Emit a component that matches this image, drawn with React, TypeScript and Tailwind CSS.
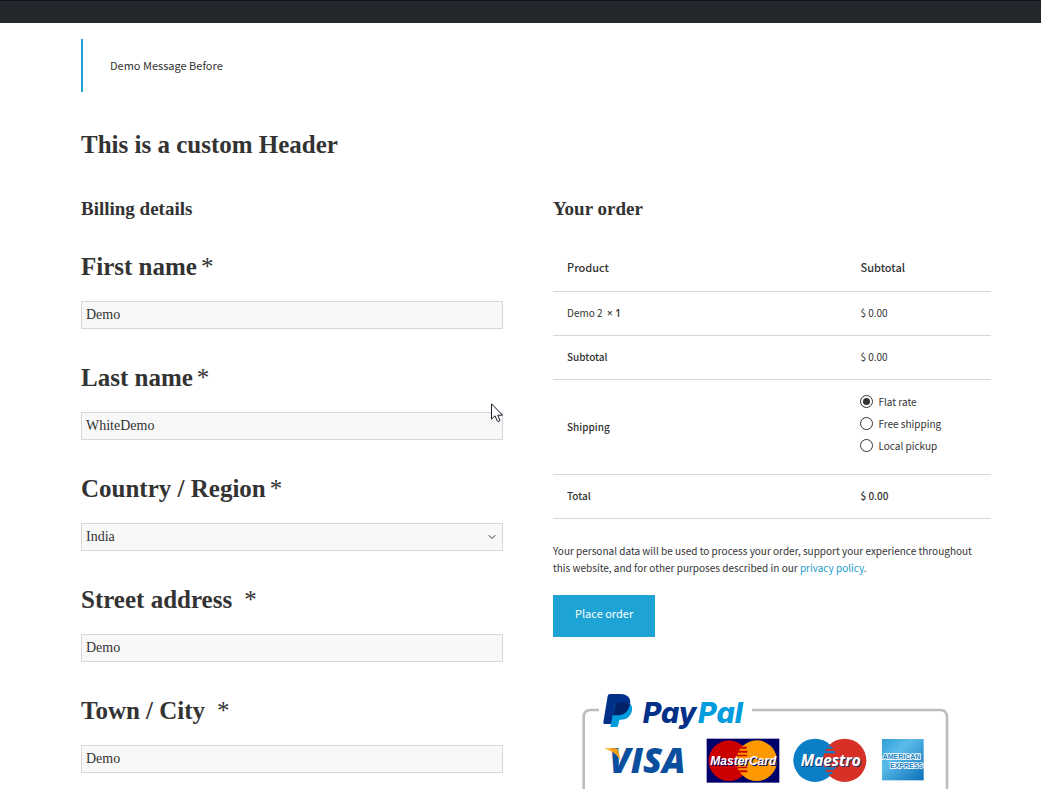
import React from "react";
import { ChevronDown } from "lucide-react";

interface FieldProps {
  id: string;
  label: string;
  // extra space between the label and the required mark
  wide?: boolean;
  children: React.ReactNode;
}

const inputClass =
  "block h-7 w-full appearance-none rounded-none border border-[#d8d8d8] bg-[#f8f8f8] px-1 font-['Liberation_Serif',serif] text-[14px] leading-5 text-[#333] outline-none";

const Field: React.FC<FieldProps> = ({ id, label, wide, children }) => (
  <div>
    <label
      htmlFor={id}
      className="mb-4 block font-['Liberation_Serif',serif] text-[25px] leading-9 font-bold"
    >
      {label}
      <span className={wide ? "ml-3 font-normal" : "ml-1 font-normal"}>*</span>
    </label>
    <div className="relative">{children}</div>
  </div>
);

const Pointer: React.FC = () => (
  <svg
    className="pointer-events-none absolute -top-[9px] right-0"
    width="12"
    height="20"
    viewBox="0 0 12 20"
    aria-hidden="true"
  >
    <path
      d="M.5 .8V16.2L4 12.8L6.4 18.2Q7.6 19 9 17.6L6.8 12.2H11.5Z"
      fill="#fff"
      stroke="#1b1b2b"
      strokeWidth="1"
    />
  </svg>
);

const shippingMethods = ["Flat rate", "Free shipping", "Local pickup"];

const PaymentLogos: React.FC = () => (
  <svg
    className="block w-full"
    viewBox="0 0 438 99"
    role="img"
    aria-label="PayPal, Visa, MasterCard, Maestro, American Express"
  >
    <defs>
      <linearGradient id="amex" x1="0" y1="0" x2="1" y2="1">
        <stop offset="0" stopColor="#2f9fd8" />
        <stop offset="0.35" stopColor="#5cbcea" />
        <stop offset="1" stopColor="#0a6fb8" />
      </linearGradient>
      <clipPath id="mc-left">
        <circle cx="560" cy="242" r="61" />
      </clipPath>
      <clipPath id="ma-left">
        <circle cx="735" cy="241" r="65" />
      </clipPath>
    </defs>
    <g transform="translate(17 -10) scale(0.33333)">
      {/* frame */}
      <g fill="none" strokeWidth="8">
        <path d="M87 90H62Q41 90 41 112V330" stroke="#bdbdbd" />
        <path d="M546 90H1111Q1131 90 1131 112V330" stroke="#bdbdbd" />
      </g>

      {/* PayPal */}
      <path
        d="M120 42H152Q186 44 180 76Q172 106 140 106H130L125 132H103Q99 132 100 127L113 48Q114 42 120 42Z"
        fill="#003087"
      />
      <path
        d="M178 69Q190 78 185 96Q178 119 152 119H148L144 138Q143 141 139 141H121L134 76Q136 69 143 69Z"
        fill="#009cde"
      />
      <path d="M143 68Q165 64 180 71Q174 106 140 106H128L135 75Q136 69 143 68Z" fill="#012169" />
      <g fontFamily="Inter, sans-serif" fontSize="86" fontWeight="800" fontStyle="italic">
        <text x="218" y="128" fill="#003087">
          Pay
        </text>
        <text x="384" y="128" fill="#009cde">
          Pal
        </text>
      </g>

      {/* Visa */}
      <text
        x="118"
        y="278"
        fill="#0a4f9e"
        fontFamily="Open Sans, sans-serif"
        fontSize="104"
        fontWeight="800"
        fontStyle="italic"
      >
        VISA
      </text>
      <path d="M102 205H136Q145 206 146 215L151 241Q137 215 102 205Z" fill="#f7a11a" />

      {/* MasterCard */}
      <rect x="410" y="176" width="218" height="132" fill="#00006b" />
      <circle cx="477" cy="242" r="61" fill="#cc0000" />
      <circle cx="560" cy="242" r="61" fill="#ff9900" />
      <g clipPath="url(#mc-left)" fill="#cc0000">
        <path d="M508 200h22v6h-22zM502 212h30v6h-30zM498 224h34v5h-34zM498 260h34v5h-34zM502 271h30v6h-30z" />
      </g>
      <g
        fontFamily="Liberation Sans Narrow, Liberation Sans, sans-serif"
        fontSize="36"
        fontWeight="700"
        fontStyle="italic"
      >
        <text x="424" y="258" fill="#00006b">
          MasterCard
        </text>
        <text x="421" y="255" fill="#fff">
          MasterCard
        </text>
      </g>

      {/* Maestro */}
      <circle cx="735" cy="241" r="65" fill="#0a7fc5" />
      <circle cx="824" cy="241" r="65" fill="#d63027" />
      <g clipPath="url(#ma-left)" fill="#0a7fc5">
        <path d="M766 199h24v7h-24zM762 213h34v7h-34zM758 262h40v7h-40zM762 276h34v7h-34z" />
      </g>
      <g fontFamily="Open Sans, sans-serif" fontSize="46" fontWeight="700" fontStyle="italic">
        <text x="695" y="260" fill="#173a6b">
          Maestro
        </text>
        <text x="692" y="257" fill="#fff">
          Maestro
        </text>
      </g>

      {/* American Express */}
      <rect x="936" y="177" width="125" height="124" fill="url(#amex)" />
      <g
        fontFamily="Liberation Sans, sans-serif"
        fontSize="21"
        fontWeight="700"
        fill="#1c7fc0"
        stroke="#fff"
        strokeWidth="5"
        paintOrder="stroke"
      >
        <text x="938" y="237">
          AMERICAN
        </text>
        <text x="960" y="263">
          EXPRESS
        </text>
      </g>
    </g>
  </svg>
);

const App: React.FC = () => {
  return (
    <div className="min-h-screen bg-white font-['Noto_Sans_CJK_SC',sans-serif] text-[#333]">
      <header className="h-[23px] border-t border-[#10131c] bg-[#23282d]" />

      <main className="pt-4 pr-[50px] pl-[81px]">
        <div className="border-l-2 border-[#1ea4d4] py-4 pl-[27px] text-[11px] leading-[21px]">
          Demo Message Before
        </div>

        <h1 className="mt-[35px] font-['Liberation_Serif',serif] text-[25px] leading-9 font-bold">
          This is a custom Header
        </h1>

        <form
          className="mt-8 grid grid-cols-[422fr_438fr] gap-x-[50px]"
          onSubmit={(e) => e.preventDefault()}
        >
          <section>
            <h2 className="font-['Liberation_Serif',serif] text-[19px] leading-7 font-bold">
              Billing details
            </h2>
            <div className="mt-[26px] flex flex-col gap-[31px]">
              <Field id="first-name" label="First name">
                <input id="first-name" className={inputClass} defaultValue="Demo" />
              </Field>
              <Field id="last-name" label="Last name">
                <input id="last-name" className={inputClass} defaultValue="WhiteDemo" />
                <Pointer />
              </Field>
              <Field id="country" label="Country / Region">
                <select id="country" className={inputClass} defaultValue="India">
                  <option>India</option>
                </select>
                <ChevronDown
                  size={12}
                  className="pointer-events-none absolute top-2 right-[5px]"
                />
              </Field>
              <Field id="street" label="Street address" wide>
                <input id="street" className={inputClass} defaultValue="Demo" />
              </Field>
              <Field id="city" label="Town / City" wide>
                <input id="city" className={inputClass} defaultValue="Demo" />
              </Field>
            </div>
          </section>

          <section>
            <h2 className="font-['Liberation_Serif',serif] text-[19px] leading-7 font-bold">
              Your order
            </h2>
            <table className="mt-[21px] w-full table-fixed text-left text-[10px] leading-4">
              <thead>
                <tr className="h-[47px] border-b border-[#d8d8d8] text-[11px]">
                  <th className="w-[67%] px-3.5 font-medium">Product</th>
                  <th className="px-3.5 font-medium">Subtotal</th>
                </tr>
              </thead>
              <tbody>
                <tr className="h-11 border-b border-[#d8d8d8]">
                  <td className="px-3.5">
                    Demo 2 &nbsp;
                    <strong className="font-['Open_Sans',sans-serif] font-semibold">× 1</strong>
                  </td>
                  <td className="px-3.5">$ 0.00</td>
                </tr>
                <tr className="h-11 border-b border-[#d8d8d8]">
                  <th className="px-3.5 font-medium">Subtotal</th>
                  <td className="px-3.5">$ 0.00</td>
                </tr>
                <tr className="h-[95px] border-b border-[#d8d8d8]">
                  <th className="px-3.5 font-medium">Shipping</th>
                  <td className="px-3.5 pb-1.5">
                    {shippingMethods.map((method, i) => (
                      <label key={method} className="flex h-[22px] items-center gap-[5px]">
                        <input
                          type="radio"
                          name="shipping"
                          defaultChecked={i === 0}
                          className="flex size-[13px] appearance-none items-center justify-center rounded-full border border-[#333] checked:before:size-[7px] checked:before:rounded-full checked:before:bg-[#333]"
                        />
                        {method}
                      </label>
                    ))}
                  </td>
                </tr>
                <tr className="h-11 border-b border-[#d8d8d8]">
                  <th className="px-3.5 font-medium">Total</th>
                  <td className="px-3.5 font-medium">$ 0.00</td>
                </tr>
              </tbody>
            </table>

            <p className="mt-[23px] text-[10px] leading-[17px]">
              Your personal data will be used to process your order, support your experience
              throughout this website, and for other purposes described in our{" "}
              <a href="#privacy" className="text-[#1e9bc8]">
                privacy policy
              </a>
              .
            </p>

            <button
              type="submit"
              className="mt-[19px] mb-[53px] block h-[42px] bg-[#1ea4d4] px-[22px] pb-1 text-[11px] text-white"
            >
              Place order
            </button>

            <PaymentLogos />
          </section>
        </form>
      </main>
    </div>
  );
};

export default App;
